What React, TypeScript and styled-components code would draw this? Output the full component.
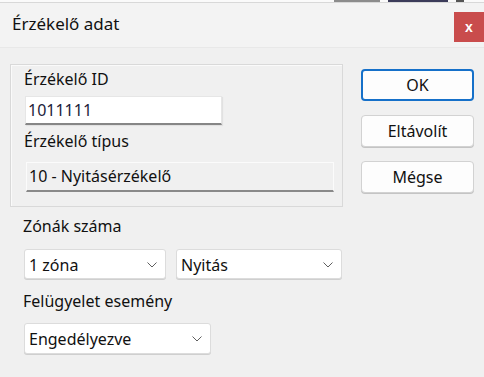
import React from "react";
import styled, { createGlobalStyle } from "styled-components";

const Global = createGlobalStyle`
  html, body { margin: 0; padding: 0; background: #f0f0f0; }
  body { font-family: "Noto Sans", "Segoe UI", sans-serif; color: #111111; }
  * { box-sizing: border-box; }
`;

const Window = styled.div`
  width: 484px;
  height: 377px;
  display: flex;
  flex-direction: column;
  background: #f0f0f0;
  overflow: hidden;
`;

const TopStrip = styled.div`
  height: 3px;
  background: #fafafa;
  border-bottom: 1px solid #d8d8d8;
  display: flex;
  justify-content: flex-end;
  padding-right: 20px;
  gap: 8px;
`;

const StripMark = styled.div<{ $w: number; $c: string }>`
  width: ${(p) => p.$w}px;
  height: 2px;
  background: ${(p) => p.$c};
`;

const TitleBar = styled.div`
  height: 45px;
  display: flex;
  align-items: flex-start;
  justify-content: space-between;
  background: #f3f3f3;
  border-bottom: 1px solid #e8e8e8;
`;

const Title = styled.div`
  margin: 10px 0 0 12px;
  font-size: 17px;
  line-height: 22px;
  color: #111111;
`;

const CloseButton = styled.div`
  margin-top: 9px;
  width: 30px;
  height: 30px;
  background: #c94c4c;
  color: #ffffff;
  font-weight: 700;
  font-size: 14px;
  display: flex;
  align-items: center;
  justify-content: center;
  font-family: "Liberation Sans", Arial, sans-serif;
`;

const Body = styled.div`
  display: flex;
  align-items: flex-start;
`;

const LeftColumn = styled.div`
  width: 333px;
  margin-left: 10px;
  display: flex;
  flex-direction: column;
`;

const GroupBox = styled.div`
  margin-top: 16px;
  height: 143px;
  border: 1px solid #d9d9d9;
  box-shadow: inset 1px 1px 0 #fafafa;
  padding: 4px 9px 0 13px;
  display: flex;
  flex-direction: column;
`;

const Label = styled.div<{ $mt?: number; $indent?: number }>`
  margin-top: ${(p) => p.$mt ?? 0}px;
  padding-left: ${(p) => p.$indent ?? 0}px;
  font-size: 16px;
  line-height: 20px;
  color: #111111;
  white-space: nowrap;
`;

const TextInput = styled.div`
  margin-top: 7px;
  margin-left: 1px;
  width: 197px;
  height: 29px;
  background: #ffffff;
  border: 1px solid #e6e6e6;
  border-bottom: 2px solid #868686;
  box-shadow: 1px 1px 1px rgba(0, 0, 0, 0.06);
  padding: 3px 0 0 2px;
  font-size: 16px;
  line-height: 20px;
  color: #1c1c3a;
`;

const ReadOnlyField = styled.div`
  margin-top: 11px;
  margin-left: 2px;
  width: 308px;
  height: 30px;
  background: #f0f0f0;
  border: 1px solid #fbfbfb;
  border-bottom: 2px solid #8a8a8a;
  padding: 3px 0 0 2px;
  font-size: 16px;
  line-height: 20px;
  color: #111111;
`;

const ComboRow = styled.div`
  margin-top: 13px;
  margin-left: 14px;
  display: flex;
  gap: 10px;
`;

const Combo = styled.div<{ $w: number; $h?: number }>`
  width: ${(p) => p.$w}px;
  height: ${(p) => p.$h ?? 30}px;
  background: #ffffff;
  border: 1px solid #dcdcdc;
  border-radius: 3px;
  box-shadow: 0 1px 0 #cfcfcf;
  display: flex;
  align-items: center;
  justify-content: space-between;
  padding: 1px 8px 0 4px;
  font-size: 16px;
  line-height: 20px;
  color: #111111;
`;

const Chevron = () => (
  <svg width="10" height="6" viewBox="0 0 10 6" fill="none">
    <path d="M0.5 0.5 L5 5 L9.5 0.5" stroke="#5f5f5f" strokeWidth="1" />
  </svg>
);

const SingleCombo = styled.div`
  margin-top: 12px;
  margin-left: 14px;
`;

const ButtonColumn = styled.div`
  margin-left: 18px;
  margin-top: 21px;
  display: flex;
  flex-direction: column;
  gap: 14px;
`;

const Button = styled.div<{ $primary?: boolean }>`
  width: 113px;
  height: 32px;
  border-radius: 4px;
  background: #fdfdfd;
  border: ${(p) => (p.$primary ? "2px solid #1570c9" : "1px solid #d2d2d2")};
  box-shadow: ${(p) => (p.$primary ? "none" : "0 1px 0 #c4c4c4")};
  display: flex;
  align-items: center;
  justify-content: center;
  font-size: 16px;
  line-height: 20px;
  color: #111111;
`;

export default function App() {
  return (
    <>
      <Global />
      <Window>
        <TopStrip>
          <StripMark $w={46} $c="#8c8c8c" />
          <StripMark $w={60} $c="#3c3c5a" />
          <StripMark $w={8} $c="#555" />
        </TopStrip>
        <TitleBar>
          <Title>Érzékelő adat</Title>
          <CloseButton>x</CloseButton>
        </TitleBar>
        <Body>
          <LeftColumn>
            <GroupBox>
              <Label>Érzékelő ID</Label>
              <TextInput>1011111</TextInput>
              <Label $mt={6}>Érzékelő típus</Label>
              <ReadOnlyField>10 - Nyitásérzékelő</ReadOnlyField>
            </GroupBox>
            <Label $mt={9} $indent={13}>Zónák száma</Label>
            <ComboRow>
              <Combo $w={142}>
                <span>1 zóna</span>
                <Chevron />
              </Combo>
              <Combo $w={166}>
                <span>Nyitás</span>
                <Chevron />
              </Combo>
            </ComboRow>
            <Label $mt={12} $indent={13}>Felügyelet esemény</Label>
            <SingleCombo>
              <Combo $w={187} $h={31}>
                <span>Engedélyezve</span>
                <Chevron />
              </Combo>
            </SingleCombo>
          </LeftColumn>
          <ButtonColumn>
            <Button $primary>OK</Button>
            <Button>Eltávolít</Button>
            <Button>Mégse</Button>
          </ButtonColumn>
        </Body>
      </Window>
    </>
  );
}
